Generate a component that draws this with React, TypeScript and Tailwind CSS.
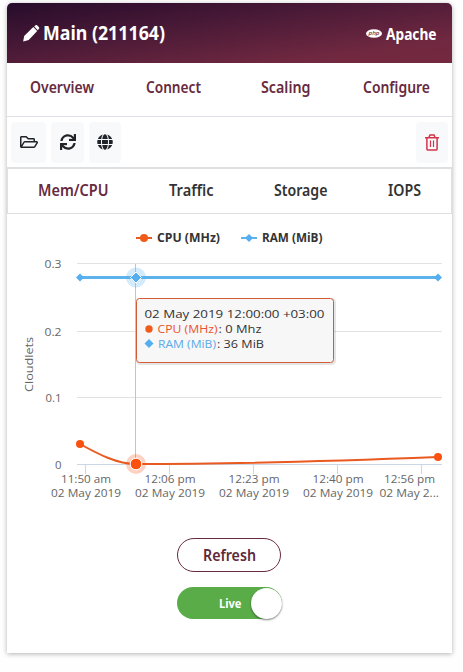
import React from "react";
import { FaGlobe, FaRegFolderOpen, FaSync } from "react-icons/fa";

const uiFont = "font-['Noto_Sans','Open_Sans',sans-serif]";

function Label({ text, width, size = 16, weight = 600, fill = "currentColor" }: { text: string; width: number; size?: number; weight?: number; fill?: string }) {
  return (
    <svg className="block shrink-0 overflow-visible" width={width} height={20} aria-label={text}>
      <text x="0" y="15" fontSize={size} fontWeight={weight} fill={fill} textLength={width} lengthAdjust="spacingAndGlyphs">{text}</text>
    </svg>
  );
}

function Pencil() {
  return (
    <svg width="17" height="17" viewBox="0 0 17 17" fill="white">
      <path d="M11.200 1.400 12.300 .5c.7-.6 1.400-.6 2 0l1.500 1.600c.6.6.6 1.400 0 2l-1 1.100z" />
      <path d="M10.300 2.100 14.200 6.100 5.700 14.900 .3 16.500 .2 16.300 1.200 11.100z" />
    </svg>
  );
}

function Trash() {
  return (
    <svg width="14" height="17" viewBox="0 0 14 17" fill="none" stroke="#d33548" strokeWidth="1.500">
      <path d="M0 3.700h14M4 3.300 5 .9h4l1 2.400M1.900 4v11.100c0 .5.3.8.8.8h8.600c.5 0 .8-.3.8-.8V4" />
      <path d="M5.500 6.500v6.500M8.500 6.500v6.500" strokeWidth="1.200" />
    </svg>
  );
}

function PhpLogo() {
  return (
    <svg width="16" height="9" viewBox="0 0 16 9">
      <ellipse cx="8" cy="4.500" rx="8" ry="4.300" fill="#fff" />
      <text x="2.500" y="6" fontSize="5.500" fontStyle="italic" fontWeight="500" fill="#653047" textLength="11" lengthAdjust="spacingAndGlyphs">php</text>
    </svg>
  );
}

const ticks = [
  { x: 85.5, time: "11:50 am", tx: 61, tw: 50, date: "02 May 2019", dx: 51, dw: 70 },
  { x: 169.5, time: "12:06 pm", tx: 144.500, tw: 51, date: "02 May 2019", dx: 135, dw: 70 },
  { x: 253.5, time: "12:23 pm", tx: 228.500, tw: 51, date: "02 May 2019", dx: 219, dw: 70 },
  { x: 337.5, time: "12:40 pm", tx: 312.500, tw: 51, date: "02 May 2019", dx: 303, dw: 70 },
  { x: 421.5, time: "12:56 pm", tx: 384, tw: 51, date: "02 May 2...", dx: 379.500, dw: 59.500 },
];

const levels = [
  { y: 263.5, text: "0.3", w: 17 },
  { y: 331.5, text: "0.2", w: 17 },
  { y: 397.5, text: "0.1", w: 16 },
  { y: 464.5, text: "0", w: 6.500 },
];

function T({ x, y, w, children, fill = "#666", size = 11, weight = 400 }: { x: number; y: number; w: number; children: string; fill?: string; size?: number; weight?: number }) {
  return <text x={x} y={y} textLength={w} lengthAdjust="spacingAndGlyphs" fill={fill} fontSize={size} fontWeight={weight}>{children}</text>;
}

function Chart() {
  return (
    <svg className="block font-['Open_Sans','Noto_Sans',sans-serif]" width="445" height="300" viewBox="7 214 445 300">
      {levels.map((l) => (
        <g key={l.text}>
          <path d={`M77 ${l.y}H442`} stroke={l.text === "0" ? "#ccd6eb" : "#e2e2e2"} />
          <T x={61.500 - l.w} y={l.y + 4} w={l.w}>{l.text}</T>
        </g>
      ))}
      {ticks.map((t) => (
        <g key={t.x}>
          <path d={`M${t.x} 464v10`} stroke="#ccd6eb" />
          <T x={t.tx} y={483} w={t.tw}>{t.time}</T>
          <T x={t.dx} y={497} w={t.dw}>{t.date}</T>
        </g>
      ))}
      <g transform="translate(33 392) rotate(-90)"><T x={0} y={0} w={55} size={11.500}>Cloudlets</T></g>

      <path d="M135.500 264V464" stroke="#c4c4c4" />
      <path d="M80 444C98 454 117 464 136 464C236 464 337 461 438 457" fill="none" stroke="#e95a20" strokeWidth="2" />
      <circle cx="80" cy="444" r="4" fill="#fa5010" />
      <circle cx="438" cy="457" r="4" fill="#fa5010" />
      <circle cx="136" cy="464" r="10" fill="#fa5010" fillOpacity=".25" />
      <circle cx="136" cy="464" r="5.800" fill="#fa5010" stroke="#fff" />

      <path d="M80 277.500H438" stroke="#5bb2ec" strokeWidth="3" />
      <path d="M76 277.500l4-4 4 4-4 4zM434 277.500l4-4 4 4-4 4z" fill="#55aef0" />
      <circle cx="136" cy="277.500" r="10" fill="#55aef0" fillOpacity=".25" />
      <path d="M130.500 277.500l5.500-5.500 5.500 5.500-5.500 5.500z" fill="#55aef0" stroke="#fff" />

      <path d="M136 238h16" stroke="#e95a20" strokeWidth="2" />
      <circle cx="144" cy="238" r="4" fill="#f15a18" />
      <T x={157} y={242} w={63} fill="#333" size={12} weight={700}>CPU (MHz)</T>
      <path d="M241 238h16" stroke="#5bb2ec" strokeWidth="2" />
      <path d="M245 238l4-4 4 4-4 4z" fill="#55aef0" />
      <T x={262} y={242} w={60.500} fill="#333" size={12} weight={700}>RAM (MiB)</T>

      <rect x="137.500" y="299.500" width="197" height="64" rx="3" fill="none" stroke="#000" strokeOpacity=".1" strokeWidth="3" />
      <rect x="136.500" y="298.500" width="197" height="64" rx="3" fill="#f7f7f7" fillOpacity=".94" stroke="#cf5c32" />
      <T x={144.500} y={318} w={180} fill="#333">02 May 2019 12:00:00 +03:00</T>
      <circle cx="149" cy="329" r="3.700" fill="#f05a1a" />
      <T x={157.500} y={333} w={60} fill="#ed502a">CPU (MHz)</T>
      <T x={218.500} y={333} w={43} fill="#333">: 0 Mhz</T>
      <path d="M144.500 343.500l4.500-4.500 4.500 4.500-4.500 4.500z" fill="#55aef0" />
      <T x={158} y={348} w={58} fill="#5aa9e8">RAM (MiB)</T>
      <T x={217} y={348} w={47} fill="#333">: 36 MiB</T>
    </svg>
  );
}

export default function App() {
  return (
    <div className={`h-[672px] w-[463px] bg-[#fefefe] pl-[7px] pt-[3px] ${uiFont}`}>
      <main className="h-[650px] w-[445px] rounded-t-[5px] bg-white shadow-[0_1px_5px_rgba(0,0,0,0.3)]">
        <header className="flex h-[60px] items-center rounded-t-[5px] bg-[linear-gradient(172deg,#270c2b_0%,#4a1a37_40%,#702840_80%,#74293f_100%)] pl-4 pr-4 text-white">
          <Pencil />
          <div className="ml-[3px] pt-[3px]"><Label text="Main (211164)" width={122} size={19} weight={700} /></div>
          <div className="ml-auto flex items-center gap-[4px]">
            <PhpLogo />
            <div className="pt-[3px]"><Label text="Apache" width={50.500} size={16} weight={700} /></div>
          </div>
        </header>
        <nav className="flex h-[54px] items-center border-b border-[#dee2e6] pb-[4px] pl-[23px] text-[#672a3f]">
          <Label text="Overview" width={64} />
          <div className="ml-[52px]"><Label text="Connect" width={55} /></div>
          <div className="ml-[59.500px]"><Label text="Scaling" width={49.500} /></div>
          <div className="ml-[53px]"><Label text="Configure" width={67} /></div>
        </nav>
        <div className="flex h-[50px] items-center pl-1 pr-1 text-[#212529]">
          <button className="flex h-[41px] w-[35px] items-center justify-center rounded bg-[#f7f9fb]"><FaRegFolderOpen size={18} /></button>
          <button className="ml-[5px] flex h-[41px] w-[33px] items-center justify-center rounded bg-[#f7f9fb]"><FaSync size={16} /></button>
          <button className="ml-[5px] flex h-[41px] w-[32px] items-center justify-center rounded bg-[#f7f9fb]"><FaGlobe size={16} /></button>
          <button className="ml-auto flex h-[41px] w-8 items-center justify-center rounded bg-[#f7f9fb]"><Trash /></button>
        </div>
        <nav className="flex h-[47px] items-center border border-t-2 border-[#dedfe0] pl-[30px] text-[#333]">
          <div className="text-[#672a3f]"><Label text="Mem/CPU" width={70.500} /></div>
          <div className="ml-[60.500px]"><Label text="Traffic" width={44.500} /></div>
          <div className="ml-[60.500px]"><Label text="Storage" width={53.500} /></div>
          <div className="ml-[60.500px]"><Label text="IOPS" width={33} /></div>
        </nav>
        <Chart />
        <div className="flex flex-col items-start pl-[170px] pt-[24px]">
          <button className="flex h-[34px] w-[104px] items-center justify-center rounded-full border border-[#672a43] pt-[2px] text-[#5e2a3a]"><Label text="Refresh" width={53} /></button>
          <button className="mt-[15px] flex h-[32px] w-[105px] items-center justify-between rounded-full bg-[#59ac48] pl-[42px] text-white">
            <Label text="Live" width={22.500} size={13} weight={700} />
            <span className="h-[31px] w-[31px] rounded-full bg-white shadow-[0_1px_2px_rgba(0,0,0,0.5)]" />
          </button>
        </div>
      </main>
    </div>
  );
}
